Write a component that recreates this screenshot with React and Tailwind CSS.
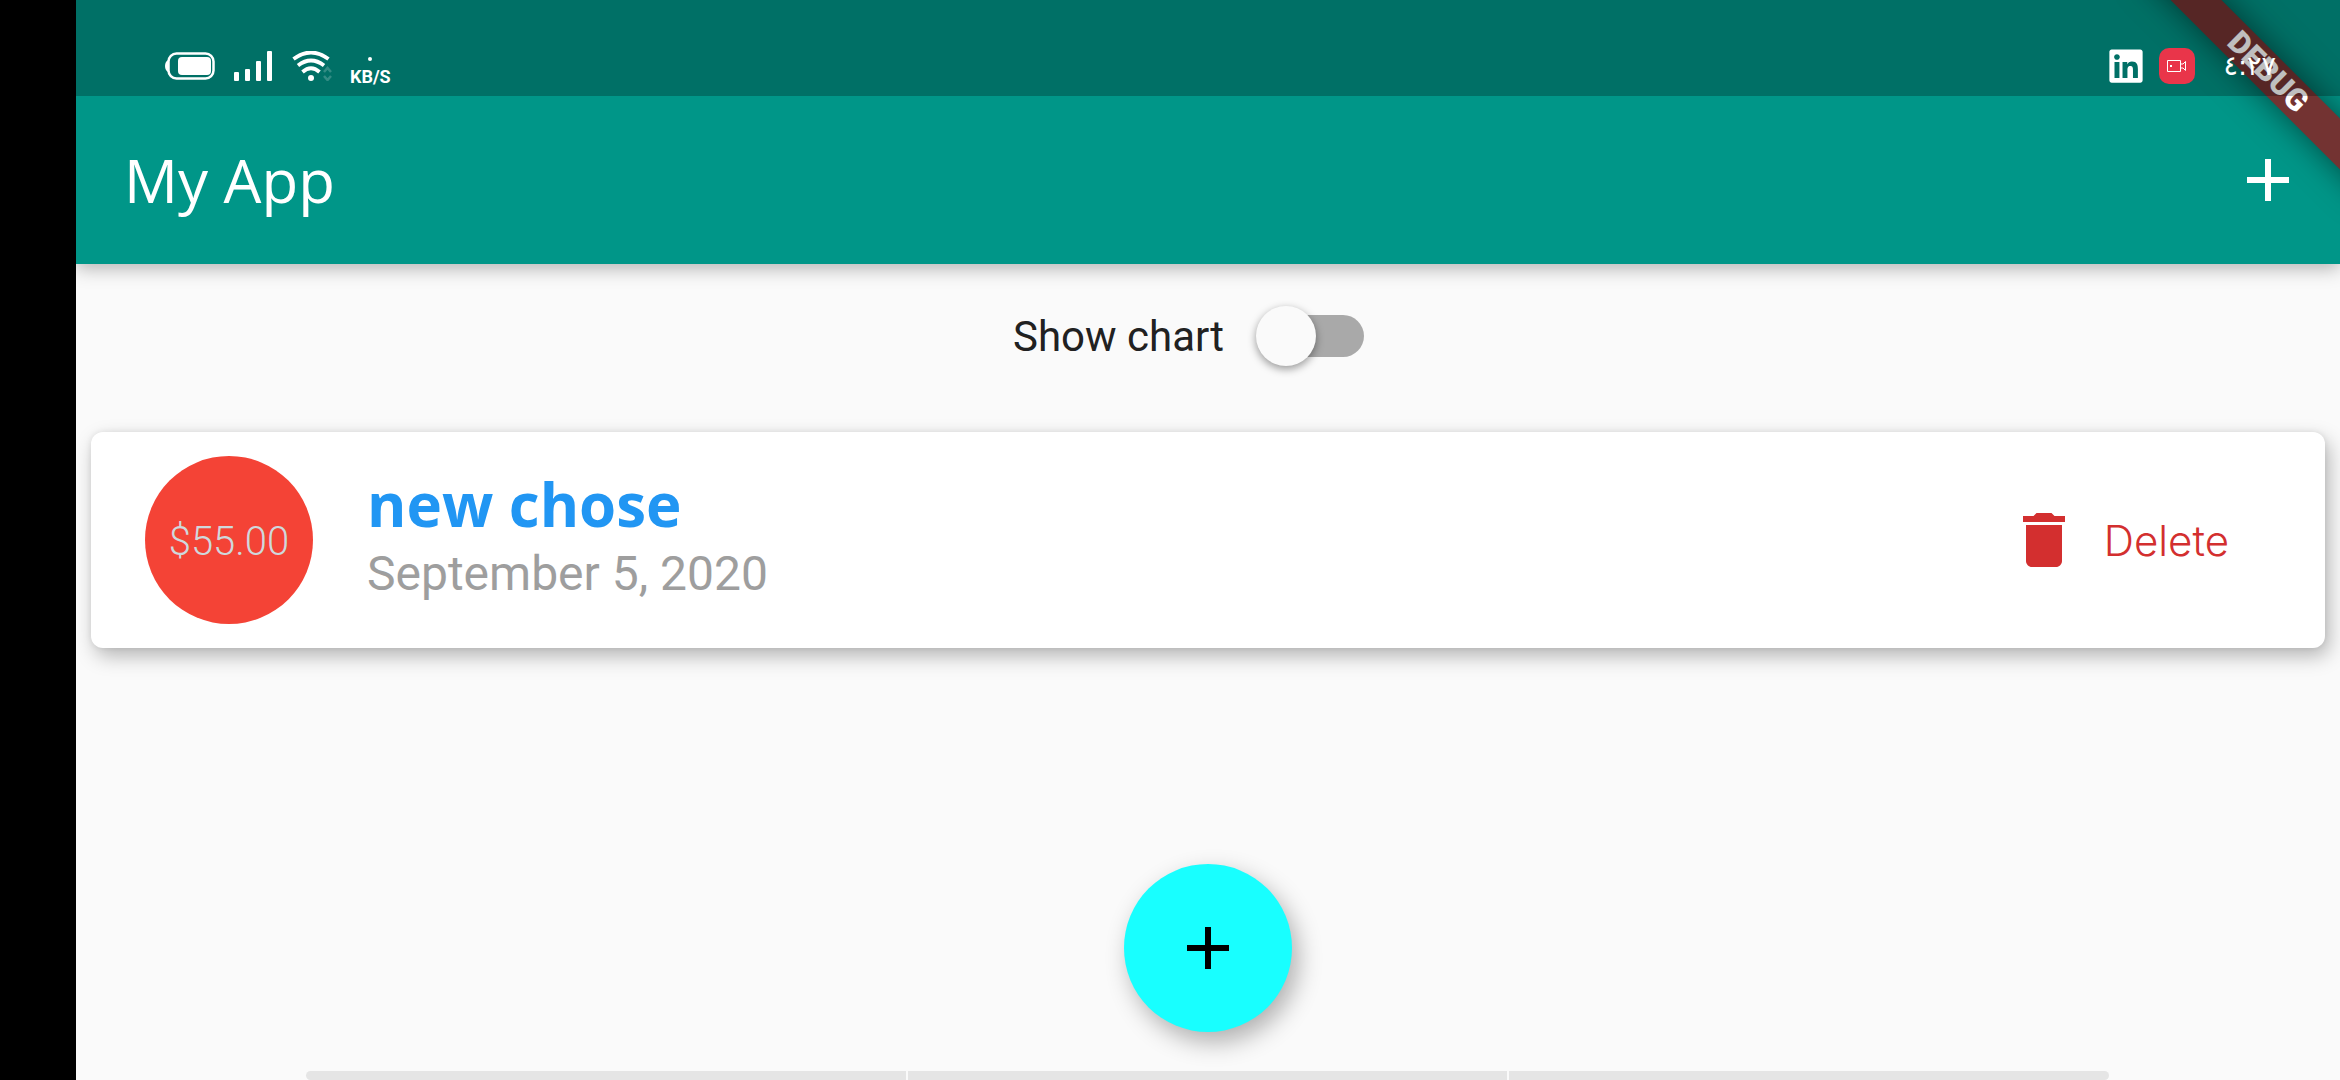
import { useState } from "react";
import { FaLinkedin } from "react-icons/fa";
import { MdAdd, MdDelete } from "react-icons/md";

function BatteryIcon() {
  return (
    <svg className="h-[30px] w-[51px]" viewBox="0 0 51 30" fill="none" aria-hidden="true">
      <path d="M3 9 Q0 11 0 15 Q0 19 3 21 Z" fill="#fff" />
      <rect x="3.5" y="2.5" width="45" height="25" rx="8" stroke="#fff" strokeWidth="2.5" />
      <rect x="13" y="6" width="33" height="18" rx="4" fill="#fff" />
    </svg>
  );
}

function SignalIcon() {
  return (
    <svg className="h-[30px] w-[38px]" viewBox="0 0 38 30" fill="#fff" aria-hidden="true">
      <rect x="0" y="21" width="5" height="9" rx="1" />
      <rect x="11" y="18" width="5" height="12" rx="1" />
      <rect x="22" y="10" width="5" height="20" rx="1" />
      <rect x="33" y="0" width="5" height="30" rx="1" />
    </svg>
  );
}

function WifiIcon() {
  return (
    <svg className="h-[30px] w-10" viewBox="0 0 40 30" fill="none" stroke="#fff" aria-hidden="true">
      <path d="M1.5 8 Q19 -5 36.5 8" strokeWidth="3.8" />
      <path d="M6 14.5 Q19 4.5 32 14.5" strokeWidth="3.8" />
      <path d="M10.5 21 Q19 13.5 27.5 21" strokeWidth="3.8" />
      <circle cx="19" cy="27" r="3" fill="#fff" stroke="none" />
      <path d="M32 21 L35.5 17 L39 21 M32 25 L35.5 29 L39 25" strokeWidth="2.5" opacity="0.2" />
    </svg>
  );
}

function RecorderIcon() {
  return (
    <span className="flex size-9 items-center justify-center rounded-[10px] bg-[#e9354a]">
      <svg className="h-3 w-5" viewBox="0 0 20 12" fill="none" stroke="#fff" aria-hidden="true">
        <path d="M0.5 0.5 H13.5 V11.5 H0.5 Z M16 4 L18.5 1.5 V10.5 L16 8 M14 4 H16 M14 8 H16" />
        <rect x="3" y="5" width="2" height="2" fill="#fff" stroke="none" />
      </svg>
    </span>
  );
}

function DebugBanner() {
  return (
    <div className="pointer-events-none absolute top-0 right-0 size-[264px] overflow-hidden">
      <div className="absolute top-[54px] -right-[88px] flex h-9 w-80 rotate-45 items-center justify-center bg-[#733332] text-[31px] leading-9 font-black text-white shadow-[0_0_32px_rgba(0,0,0,0.5)]">
        DEBUG
      </div>
    </div>
  );
}

function StatusBar() {
  return (
    <div className="relative flex h-24 items-end justify-between bg-black/25 pr-16 pb-3 pl-[89px] text-white">
      <div className="flex h-9 items-center">
        <BatteryIcon />
        <span className="ml-[18px] flex"><SignalIcon /></span>
        <span className="ml-5 flex"><WifiIcon /></span>
        <span className="ml-[18px] flex flex-col items-center pt-3 text-lg leading-5 font-bold">
          <span className="size-1 rounded-full bg-white" />
          <span className="pt-1.5">KB/S</span>
        </span>
      </div>
      <div className="flex h-9 items-center">
        <FaLinkedin className="size-[38px]" />
        <span className="ml-3.5"><RecorderIcon /></span>
        <span dir="ltr" className="ml-7 font-['DejaVu_Sans',sans-serif] text-[27px] leading-9">٤:٢٧</span>
      </div>
    </div>
  );
}

function Transaction({ amount, title, date, onDelete }) {
  return (
    <li className="flex h-[216px] items-center rounded-xl bg-white px-[54px] shadow-[4px_8px_20px_rgba(0,0,0,0.28),0_0_6px_rgba(0,0,0,0.08)]">
      <div className="flex size-[168px] shrink-0 items-center justify-center rounded-full bg-[#f44336] pt-1 text-[40px] font-light text-[#cfd8dc]">
        {amount}
      </div>
      <div className="ml-[54px] grow pb-2">
        <h2 className="mb-1 font-['Open_Sans',sans-serif] text-[60px] leading-[72px] font-bold text-[#2196f3]">{title}</h2>
        <p className="text-5xl leading-[60px] text-[#9e9e9e]">{date}</p>
      </div>
      <button type="button" onClick={onDelete} className="mr-[42px] flex items-center gap-6 font-['Inter',sans-serif] text-[42px] font-light text-[#d32f2f]">
        <MdDelete className="size-[72px]" />
        Delete
      </button>
    </li>
  );
}

export default function App() {
  const [showChart, setShowChart] = useState(false);
  const [items, setItems] = useState([{ id: 1, amount: "$55.00", title: "new chose", date: "September 5, 2020" }]);
  const add = () => setItems((list) => [...list, { id: Date.now(), amount: "$55.00", title: "new chose", date: "September 5, 2020" }]);

  return (
    <div className="flex min-h-screen bg-black font-['Roboto',sans-serif]">
      <div className="ml-[76px] flex grow flex-col overflow-hidden bg-[#fafafa]">
        <header className="relative bg-[#009688] shadow-[0_4px_18px_rgba(0,0,0,0.3)]">
          <DebugBanner />
          <StatusBar />
          <div className="flex h-[168px] items-center justify-between pr-9 pl-12 text-white">
            <h1 className="font-['Open_Sans',sans-serif] text-[60px]">My App</h1>
            <button type="button" aria-label="Add transaction" onClick={add}>
              <MdAdd className="size-[72px]" />
            </button>
          </div>
        </header>

        <main className="flex grow flex-col">
          <label className="flex h-36 items-center justify-center gap-0.5 text-[42px] text-[#212121]">
            Show chart
            <span className="relative flex h-[60px] w-[177px] items-center justify-center">
              <input
                type="checkbox"
                role="switch"
                checked={showChart}
                onChange={(e) => setShowChart(e.target.checked)}
                className="peer h-[42px] w-[99px] appearance-none rounded-full bg-[#a9a9a9] checked:bg-teal-300"
              />
              <span className="pointer-events-none absolute top-0 left-[30px] size-[60px] rounded-full bg-[#fafafa] shadow-[0_3px_8px_rgba(0,0,0,0.4)] peer-checked:left-[87px]" />
            </span>
          </label>
          <ul className="flex flex-col gap-6 px-[15px] pt-6">
            {items.map(({ id, ...item }) => (
              <Transaction key={id} {...item} onDelete={() => setItems((list) => list.filter((i) => i.id !== id))} />
            ))}
          </ul>
        </main>

        <footer className="flex flex-col items-center gap-[39px]">
          <button type="button" aria-label="New transaction" onClick={add} className="flex size-[168px] items-center justify-center rounded-full bg-[#18ffff] text-black shadow-[6px_10px_24px_rgba(0,0,0,0.3)]">
            <MdAdd className="size-[72px]" />
          </button>
          <div className="flex h-[9px] w-full gap-0.5 pr-[231px] pl-[230px]">
            <span className="grow rounded-l-md bg-[#e5e5e5]" />
            <span className="grow bg-[#e5e5e5]" />
            <span className="grow rounded-r-md bg-[#e5e5e5]" />
          </div>
        </footer>
      </div>
    </div>
  );
}
